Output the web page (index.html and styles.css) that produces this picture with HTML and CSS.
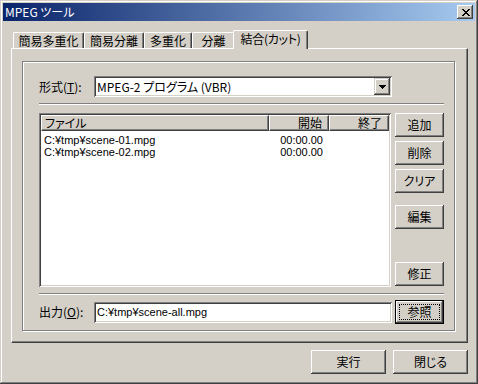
FILE: index.html
```html
<!DOCTYPE html>
<html lang="ja">
<head>
    <meta charset="UTF-8">
    <meta name="viewport" content="width=device-width, initial-scale=1.0">
    <title>MPEG ツール</title>
    <link rel="stylesheet" href="styles.css">
</head>
<body>
    <div class="window">
        <div class="titlebar">
            <span class="title">MPEG ツール</span>
            <button class="close" type="button" aria-label="閉じる">
                <svg width="8" height="7" viewBox="0 0 8 7" shape-rendering="crispEdges">
                    <path fill="#000" d="M0 0h2v1H0zM6 0h2v1H6zM1 1h2v1H1zM5 1h2v1H5zM2 2h4v1H2zM3 3h2v1H3zM2 4h4v1H2zM1 5h2v1H1zM5 5h2v1H5zM0 6h2v1H0zM6 6h2v1H6z"/>
                </svg>
            </button>
        </div>
        <div class="client">
            <div class="tabs">
                <div class="tab tab-w5">簡易多重化</div>
                <div class="tab tab-w4">簡易分離</div>
                <div class="tab tab-w3">多重化</div>
                <div class="tab tab-w2">分離</div>
                <div class="tab tab-w5 active">結合(カット)</div>
            </div>
            <div class="pane">
                <div class="frame">
                    <div class="field-row">
                        <label class="label">形式(<u>T</u>):</label>
                        <div class="combo sunken">
                            <span class="combo-text">MPEG-2 プログラム (VBR)</span>
                            <span class="combo-btn">
                                <svg width="7" height="4" viewBox="0 0 7 4" shape-rendering="crispEdges">
                                    <path fill="#000" d="M0 0h7v1H0zM1 1h5v1H1zM2 2h3v1H2zM3 3h1v1H3z"/>
                                </svg>
                            </span>
                        </div>
                    </div>
                    <div class="sep sep-top"></div>
                    <div class="list-row">
                        <div class="listbox sunken">
                            <div class="list-head">
                                <div class="col col-file">ファイル</div>
                                <div class="col col-start">開始</div>
                                <div class="col col-end">終了</div>
                            </div>
                            <ul class="list-body">
                                <li><span class="c-file">C:¥tmp¥scene-01.mpg</span><span class="c-start">00:00.00</span><span class="c-end"></span></li>
                                <li><span class="c-file">C:¥tmp¥scene-02.mpg</span><span class="c-start">00:00.00</span><span class="c-end"></span></li>
                            </ul>
                        </div>
                        <div class="side-buttons">
                            <button class="btn" type="button">追加</button>
                            <button class="btn" type="button">削除</button>
                            <button class="btn" type="button">クリア</button>
                            <button class="btn btn-edit" type="button">編集</button>
                            <button class="btn btn-fix" type="button">修正</button>
                        </div>
                    </div>
                    <div class="sep sep-bottom"></div>
                    <div class="field-row output-row">
                        <label class="label">出力(<u>O</u>):</label>
                        <div class="textbox sunken">C:¥tmp¥scene-all.mpg</div>
                        <button class="btn default" type="button"><span class="focus">参照</span></button>
                    </div>
                </div>
            </div>
            <div class="footer">
                <button class="btn wide" type="button">実行</button>
                <button class="btn wide" type="button">閉じる</button>
            </div>
        </div>
    </div>
</body>
</html>
```

FILE: styles.css
```css
* {
    box-sizing: border-box;
}
html, body {
    margin: 0;
    padding: 0;
}
body {
    width: 478px;
    height: 384px;
    overflow: hidden;
    background: #d4d0c8;
    color: #000;
    font-family: "Noto Sans CJK JP", "Liberation Sans", sans-serif;
    font-size: 12px;
    line-height: 12px;
    font-feature-settings: "palt";
}
button {
    font: inherit;
    color: #000;
    border: none;
    padding: 0;
    margin: 0;
    background: #d4d0c8;
}

/* window frame */
.window {
    width: 478px;
    height: 384px;
    padding: 3px;
    display: flex;
    flex-direction: column;
    background: #d4d0c8;
    box-shadow: inset -1px -1px #404040, inset 1px 1px #d4d0c8, inset -2px -2px #808080, inset 2px 2px #fff;
}
.titlebar {
    flex: none;
    height: 18px;
    display: flex;
    align-items: center;
    justify-content: space-between;
    padding: 0 2px 0 2px;
    background: linear-gradient(to right, #0a246a, #a6caf0);
    color: #fff;
}
.title {
    line-height: 14px;
}
.close {
    width: 16px;
    height: 14px;
    display: flex;
    align-items: center;
    justify-content: center;
    padding-left: 1px;
    box-shadow: inset -1px -1px #404040, inset 1px 1px #fff, inset -2px -2px #808080, inset 2px 2px #d4d0c8;
}
.close svg {
    display: block;
}
.client {
    flex: 1;
    display: flex;
    flex-direction: column;
    padding: 9px 7px 0 8px;
}

/* tabs */
.tabs {
    height: 18px;
    display: flex;
    align-items: flex-end;
    padding-left: 2px;
}
.tab {
    height: 16px;
    padding: 0;
    text-align: center;
    line-height: 15px;
    white-space: nowrap;
    border-top: 1px solid #fff;
    border-left: 1px solid #fff;
    border-right: 1px solid #404040;
    border-radius: 2px 2px 0 0;
    box-shadow: inset -1px 0 #808080;
}
.tab-w5 {
    width: 71px;
}
.tab-w4 {
    width: 60px;
}
.tab-w3 {
    width: 48px;
}
.tab-w2 {
    width: 43px;
}
.tab.active {
    position: relative;
    z-index: 1;
    width: 75px;
    height: 19px;
    margin: 0 -2px -1px -2px;
    line-height: 16px;
    letter-spacing: -0.3px;
    background: #d4d0c8;
}
.pane {
    padding: 12px 12px 11px 10px;
    border-top: 1px solid #fff;
    border-left: 1px solid #fff;
    border-right: 1px solid #404040;
    border-bottom: 1px solid #404040;
    box-shadow: inset -1px -1px #808080;
}

/* etched frame */
.frame {
    height: 270px;
    padding: 14px 10px 6px 16px;
    border: 1px solid #808080;
    box-shadow: inset 1px 1px #fff, 1px 1px #fff;
    display: flex;
    flex-direction: column;
}
.field-row {
    display: flex;
    align-items: center;
    height: 21px;
}
.label {
    width: 55px;
    flex: none;
    white-space: nowrap;
}
.sunken {
    background: #fff;
    box-shadow: inset 1px 1px #808080, inset -1px -1px #fff, inset 2px 2px #404040, inset -2px -2px #d4d0c8;
}
.combo {
    width: 298px;
    height: 21px;
    padding: 2px;
    display: flex;
}
.combo-text {
    flex: 1;
    padding-left: 1px;
    line-height: 17px;
    white-space: nowrap;
}
.combo-btn {
    width: 16px;
    height: 17px;
    display: flex;
    align-items: center;
    justify-content: center;
    padding-top: 1px;
    background: #d4d0c8;
    box-shadow: inset -1px -1px #404040, inset 1px 1px #d4d0c8, inset -2px -2px #808080, inset 2px 2px #fff;
}
.combo-btn svg {
    display: block;
}
.sep {
    flex: none;
    height: 2px;
    border-top: 1px solid #808080;
    border-bottom: 1px solid #fff;
}
.sep-top {
    margin: 6px 0 8px;
}
.sep-bottom {
    margin: 6px 0 5px;
}

/* file list */
.list-row {
    height: 174px;
    display: flex;
    gap: 4px;
}
.listbox {
    width: 352px;
    height: 174px;
    padding: 2px;
}
.list-head {
    display: flex;
    height: 16px;
}
.col {
    height: 16px;
    padding: 0 6px 0 3px;
    line-height: 14px;
    white-space: nowrap;
    background: #d4d0c8;
    border-top: 1px solid #fff;
    border-left: 1px solid #fff;
    border-right: 1px solid #404040;
    border-bottom: 1px solid #404040;
    box-shadow: inset -1px -1px #808080;
}
.col-file {
    width: 228px;
}
.col-start, .col-end {
    width: 60px;
    text-align: right;
}
.list-body {
    list-style: none;
    margin: 0;
    padding: 3px 0 0;
    font-family: "Liberation Sans", "Noto Sans CJK JP", sans-serif;
    font-size: 11px;
}
.list-body li {
    display: flex;
    height: 12px;
    line-height: 12px;
    white-space: nowrap;
}
.c-file {
    width: 228px;
    padding-left: 3px;
}
.c-start, .c-end {
    width: 60px;
    padding-right: 6px;
    text-align: right;
}

/* buttons */
.btn {
    width: 49px;
    height: 24px;
    flex: none;
    text-align: center;
    line-height: 24px;
    white-space: nowrap;
    box-shadow: inset -1px -1px #404040, inset 1px 1px #fff, inset -2px -2px #808080, inset 2px 2px #d4d0c8;
}
.side-buttons {
    display: flex;
    flex-direction: column;
    gap: 4px;
}
.btn-edit {
    margin-top: 8px;
}
.btn-fix {
    margin-top: 29px;
}
.output-row {
    height: 24px;
}
.textbox {
    width: 298px;
    height: 21px;
    margin-right: 3px;
    padding: 2px 3px;
    line-height: 17px;
    white-space: nowrap;
    font-family: "Liberation Sans", "Noto Sans CJK JP", sans-serif;
    font-size: 11px;
}
.btn.default {
    border: 1px solid #000;
    padding: 3px;
    line-height: 14px;
}
.focus {
    display: block;
    height: 100%;
    border: 1px dotted #000;
    line-height: 14px;
}
.footer {
    display: flex;
    justify-content: flex-end;
    gap: 7px;
    margin-top: 7px;
}
.btn.wide {
    width: 75px;
}
```
